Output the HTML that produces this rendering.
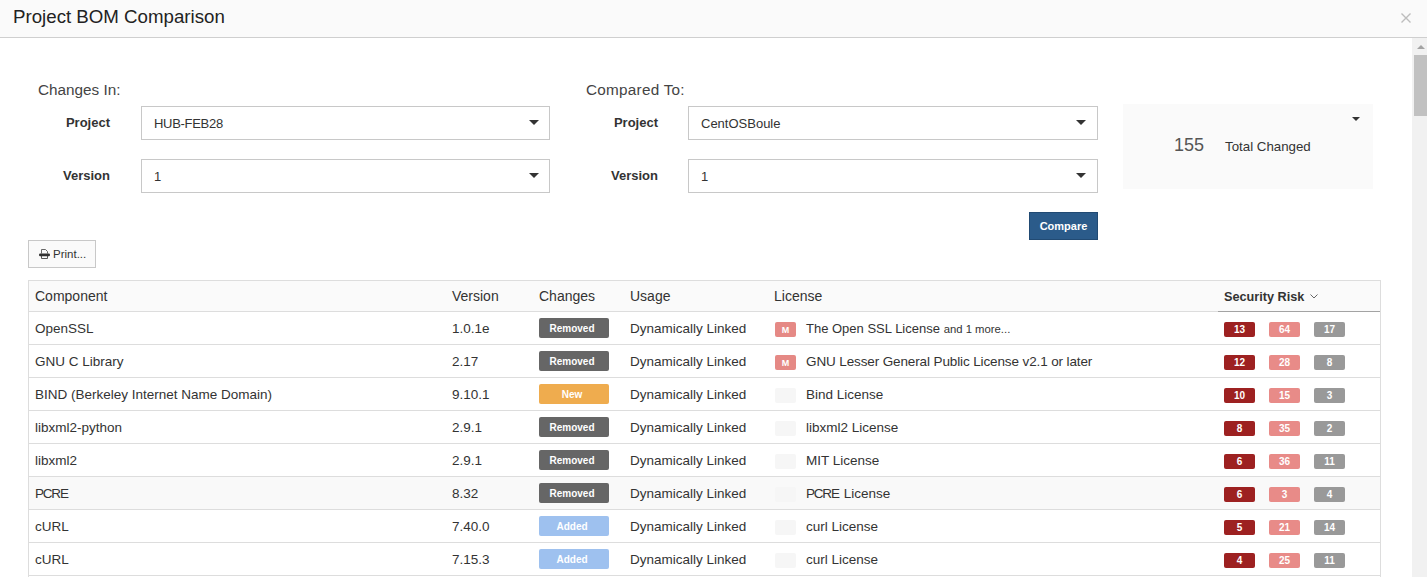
<!DOCTYPE html>
<html><head><meta charset="utf-8">
<style>
*{margin:0;padding:0;box-sizing:border-box}
html,body{width:1427px;height:577px;overflow:hidden;background:#fff;font-family:"Liberation Sans",sans-serif;color:#333}
.a{position:absolute;white-space:nowrap}
#hdr{position:absolute;left:0;top:0;width:1427px;height:38px;background:#fafafa;border-bottom:1px solid #cfcfcf}
#title{left:13px;top:6px;font-size:18.7px;color:#222}
#close{left:1401px;top:13px;width:10px;height:10px}
#sb{position:absolute;left:1412px;top:38px;width:15px;height:539px;background:#f1f1f1}
#thumb{position:absolute;left:2px;top:17px;width:13px;height:61px;background:#c1c1c1}
.lbl{font-size:15.3px;color:#444}
.flbl{font-size:13px;font-weight:bold;color:#333;text-align:right;width:100px}
.sel{position:absolute;border:1px solid #c8c8c8;background:#fff;height:34px}
.sel .v{position:absolute;left:12px;top:9px;font-size:13px;color:#333}
.caret{position:absolute;width:0;height:0;border-left:5px solid transparent;border-right:5px solid transparent;border-top:5px solid #333}
#sum{position:absolute;left:1123px;top:104px;width:250px;height:85px;background:#fafafa}
#cmp{position:absolute;left:1029px;top:212px;width:69px;height:28px;background:#2b5b8a;border:1px solid #214a73;color:#fff;font-size:11px;font-weight:bold;text-align:center;line-height:26px}
#print{position:absolute;left:28px;top:240px;width:68px;height:28px;border:1px solid #c8c8c8;background:#fafafa;font-size:12px;color:#333}
#tbl{position:absolute;left:28px;top:280px;width:1353px;height:300px;border:1px solid #ddd;border-bottom:none}
.th{position:absolute;left:0;top:0;width:1351px;height:31px;background:#fafafa;border-bottom:1px solid #ddd}
.row{position:absolute;left:0;width:1351px;height:33px;border-bottom:1px solid #ddd;background:#fff}
.row.hov{background:#f9f9f9}
.c{position:absolute;top:9px;font-size:13.5px;color:#333;white-space:nowrap}
.hc{position:absolute;top:7px;font-size:14px;color:#333;white-space:nowrap}
.chg{position:absolute;left:510px;top:6px;width:70px;height:20px;border-radius:2px;color:#fff;font-size:10px;font-weight:bold;text-align:center;line-height:22px;padding-right:4px}
.rem{background:#666}
.new{background:#efac4e}
.add{background:#9ec1ef}
.lic{position:absolute;left:746px;top:10px;width:21px;height:15px;border-radius:2px;background:#f6f6f6;color:#fff;font-size:9px;font-weight:bold;text-align:center;line-height:16px}
.lic.m{background:#e58985}
.sr{position:absolute;top:10px;width:31px;height:15px;border-radius:2px;color:#fff;font-size:10px;font-weight:bold;text-align:center;line-height:16px}
.s1{left:1195px;background:#9d2121}
.s2{left:1240px;background:#e88b88}
.s3{left:1285px;background:#999}
</style></head><body>
<div id="hdr"></div>
<div id="title" class="a">Project BOM Comparison</div>
<svg id="close" class="a" viewBox="0 0 10 10"><path d="M0.5 0.5L9.5 9.5M9.5 0.5L0.5 9.5" stroke="#bdbdbd" stroke-width="1.4"/></svg>
<div id="sb"><svg style="position:absolute;left:5px;top:7px" width="8" height="4" viewBox="0 0 8 4"><path d="M0 4L4 0L8 4Z" fill="#a3a3a3"/></svg><div id="thumb"></div></div>

<div class="a lbl" style="left:38px;top:81px">Changes In:</div>
<div class="a flbl" style="left:10px;top:115px">Project</div>
<div class="sel" style="left:141px;top:106px;width:409px"><span class="v" style="letter-spacing:-0.3px">HUB-FEB28</span><span class="caret" style="left:387px;top:13px"></span></div>
<div class="a flbl" style="left:10px;top:168px">Version</div>
<div class="sel" style="left:141px;top:159px;width:409px"><span class="v">1</span><span class="caret" style="left:387px;top:13px"></span></div>

<div class="a lbl" style="left:586px;top:81px;letter-spacing:0.25px">Compared To:</div>
<div class="a flbl" style="left:558px;top:115px">Project</div>
<div class="sel" style="left:688px;top:106px;width:410px"><span class="v">CentOSBoule</span><span class="caret" style="left:387px;top:13px"></span></div>
<div class="a flbl" style="left:558px;top:168px">Version</div>
<div class="sel" style="left:688px;top:159px;width:410px"><span class="v">1</span><span class="caret" style="left:387px;top:13px"></span></div>

<div id="sum">
  <span class="caret" style="left:229px;top:13px;border-left-width:4px;border-right-width:4px;border-top-width:4px"></span>
  <div class="a" style="left:51px;top:31px;font-size:18px;color:#555">155</div>
  <div class="a" style="left:102px;top:35px;font-size:13.3px;color:#333">Total Changed</div>
</div>
<div id="cmp">Compare</div>
<div id="print"><svg style="position:absolute;left:10px;top:8px" width="11" height="10" viewBox="0 0 11 10"><path d="M2.5 4.5V0.5H6.5L8.5 2.5V4.5" fill="none" stroke="#555" stroke-width="0.9"/><rect x="0" y="4.6" width="11" height="2.6" rx="1.2" fill="#333"/><path d="M2.5 7V9.5H8.5V7" fill="none" stroke="#444" stroke-width="0.9"/></svg><span class="a" style="left:24px;top:7px;font-size:11.5px">Print...</span></div>

<div id="tbl">
<div class="th"><span class="hc" style="left:6px">Component</span><span class="hc" style="left:423px">Version</span><span class="hc" style="left:510px">Changes</span><span class="hc" style="left:601px">Usage</span><span class="hc" style="left:745px">License</span><span class="hc" style="left:1195px;font-weight:bold;font-size:12.7px;top:9px">Security Risk</span><svg style="position:absolute;left:1281px;top:13px" width="8" height="5" viewBox="0 0 8 5"><path d="M0.5 0.5L4 4L7.5 0.5" fill="none" stroke="#666" stroke-width="1"/></svg><div style="position:absolute;left:1189px;top:30px;width:162px;height:1px;background:#a3a3a3"></div></div>
<div class="row" style="top:31px"><span class="c" style="left:6px">OpenSSL</span><span class="c" style="left:423px">1.0.1e</span><span class="chg rem">Removed</span><span class="c" style="left:601px">Dynamically Linked</span><span class="lic m">M</span><span class="c" style="left:777px"><span style="font-size:13px">The Open SSL License</span> <span style="font-size:11.3px">and 1 more...</span></span><span class="sr s1">13</span><span class="sr s2">64</span><span class="sr s3">17</span></div>
<div class="row" style="top:64px"><span class="c" style="left:6px">GNU C Library</span><span class="c" style="left:423px">2.17</span><span class="chg rem">Removed</span><span class="c" style="left:601px">Dynamically Linked</span><span class="lic m">M</span><span class="c" style="left:777px;letter-spacing:-0.12px">GNU Lesser General Public License v2.1 or later</span><span class="sr s1">12</span><span class="sr s2">28</span><span class="sr s3">8</span></div>
<div class="row" style="top:97px"><span class="c" style="left:6px">BIND (Berkeley Internet Name Domain)</span><span class="c" style="left:423px">9.10.1</span><span class="chg new">New</span><span class="c" style="left:601px">Dynamically Linked</span><span class="lic"></span><span class="c" style="left:777px">Bind License</span><span class="sr s1">10</span><span class="sr s2">15</span><span class="sr s3">3</span></div>
<div class="row" style="top:130px"><span class="c" style="left:6px">libxml2-python</span><span class="c" style="left:423px">2.9.1</span><span class="chg rem">Removed</span><span class="c" style="left:601px">Dynamically Linked</span><span class="lic"></span><span class="c" style="left:777px">libxml2 License</span><span class="sr s1">8</span><span class="sr s2">35</span><span class="sr s3">2</span></div>
<div class="row" style="top:163px"><span class="c" style="left:6px">libxml2</span><span class="c" style="left:423px">2.9.1</span><span class="chg rem">Removed</span><span class="c" style="left:601px">Dynamically Linked</span><span class="lic"></span><span class="c" style="left:777px">MIT License</span><span class="sr s1">6</span><span class="sr s2">36</span><span class="sr s3">11</span></div>
<div class="row hov" style="top:196px"><span class="c" style="left:6px"><span style="letter-spacing:-1.2px">PCR</span>E</span><span class="c" style="left:423px">8.32</span><span class="chg rem">Removed</span><span class="c" style="left:601px">Dynamically Linked</span><span class="lic"></span><span class="c" style="left:777px"><span style="letter-spacing:-1.2px">PCR</span>E License</span><span class="sr s1">6</span><span class="sr s2">3</span><span class="sr s3">4</span></div>
<div class="row" style="top:229px"><span class="c" style="left:6px">cURL</span><span class="c" style="left:423px">7.40.0</span><span class="chg add">Added</span><span class="c" style="left:601px">Dynamically Linked</span><span class="lic"></span><span class="c" style="left:777px">curl License</span><span class="sr s1">5</span><span class="sr s2">21</span><span class="sr s3">14</span></div>
<div class="row" style="top:262px"><span class="c" style="left:6px">cURL</span><span class="c" style="left:423px">7.15.3</span><span class="chg add">Added</span><span class="c" style="left:601px">Dynamically Linked</span><span class="lic"></span><span class="c" style="left:777px">curl License</span><span class="sr s1">4</span><span class="sr s2">25</span><span class="sr s3">11</span></div>
</div>
</body></html>
